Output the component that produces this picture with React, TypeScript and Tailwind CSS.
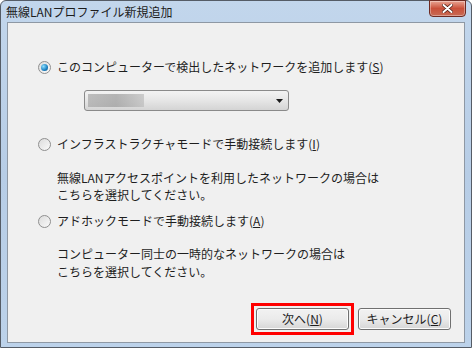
import React from 'react';

const font = { fontFamily: '"Noto Sans CJK JP", "Noto Sans", sans-serif' };

const Radio: React.FC<{ checked?: boolean }> = ({ checked }) => (
  <span className="relative flex items-center justify-center w-[13px] h-[13px] rounded-full border border-[#8f8f8f] bg-gradient-to-br from-[#dcdcdc] to-[#fafafa] shrink-0">
    {checked && (
      <span className="w-[7px] h-[7px] rounded-full bg-[radial-gradient(circle_at_35%_35%,#8fe0ff,#1a7fc0_60%,#0d4f80)]" />
    )}
  </span>
);

const Option: React.FC<{ label: string; keyChar: string; checked?: boolean }> = ({ label, keyChar, checked }) => (
  <div className="flex items-center gap-[6px] h-[16px]">
    <Radio checked={checked} />
    <span className="text-[12px] leading-[16px] text-[#1e1e1e]">
      {label}(<span className="underline">{keyChar}</span>)
    </span>
  </div>
);

const Button: React.FC<{ children: React.ReactNode }> = ({ children }) => (
  <div className="w-[93px] h-[22px] rounded-[3px] border border-[#707070] bg-gradient-to-b from-[#f2f2f2] via-[#ebebeb] to-[#d6d6d6] flex items-center justify-center text-[12px] text-[#1e1e1e] shadow-[inset_0_0_0_1px_#fcfcfc]">
    {children}
  </div>
);

export default function App() {
  return (
    <div style={font} className="w-[472px] h-[348px] bg-[#fff] overflow-hidden">
      <div className="w-[472px] h-[348px] rounded-t-[6px] border border-[#555c66] bg-gradient-to-b from-[#c2d6ec] via-[#b7cde6] to-[#bcd2ea] flex flex-col">
        {/* title bar */}
        <div className="h-[21px] flex items-start justify-between pl-[5px] pr-[5px]">
          <span className="text-[12px] leading-[20px] text-[#1c1c1c] mt-[1px]">無線LANプロファイル新規追加</span>
          <div className="w-[37px] h-[17px] -mt-[1px] rounded-b-[4px] border border-[#6e2a22] bg-gradient-to-b from-[#e8a493] via-[#c9503a] to-[#c86a55] flex items-center justify-center shadow-[inset_0_0_0_1px_rgba(255,255,255,0.35)]">
            <svg width="11" height="9" viewBox="0 0 11 9">
              <path d="M1.5 1 L9.5 8 M9.5 1 L1.5 8" stroke="#4a1810" strokeWidth="3.4" strokeLinecap="round" />
              <path d="M1.5 1 L9.5 8 M9.5 1 L1.5 8" stroke="#ffffff" strokeWidth="2" strokeLinecap="round" />
            </svg>
          </div>
        </div>
        {/* client area */}
        <div className="mx-[6px] mb-[4px] flex-1 border border-[#8e98a4] bg-[#f0f0f0] flex flex-col pl-[30px] text-[#1e1e1e]">
          <div className="mt-[36px]">
            <Option label="このコンピューターで検出したネットワークを追加します" keyChar="S" checked />
          </div>
          <div className="mt-[15px] ml-[46px] w-[205px] h-[21px] rounded-[3px] border border-[#8a8a8a] bg-gradient-to-b from-[#f3f3f3] via-[#e6e6e6] to-[#d4d4d4] flex items-center justify-between pl-[3px] pr-[5px]">
            <div className="w-[56px] h-[13px] bg-gradient-to-r from-[#a8a8a8] via-[#9a9a9a] to-[#bdbdbd] opacity-70" />
            <svg width="7" height="4" viewBox="0 0 7 4"><path d="M0 0 H7 L3.5 4 Z" fill="#1a1a1a" /></svg>
          </div>
          <div className="mt-[25px]">
            <Option label="インフラストラクチャモードで手動接続します" keyChar="I" />
          </div>
          <div className="mt-[17px] ml-[19px] text-[12px] leading-[17px]">
            <div>無線LANアクセスポイントを利用したネットワークの場合は</div>
            <div>こちらを選択してください。</div>
          </div>
          <div className="mt-[10px]">
            <Option label="アドホックモードで手動接続します" keyChar="A" />
          </div>
          <div className="mt-[16px] ml-[19px] text-[12px] leading-[18px]">
            <div>コンピューター同士の一時的なネットワークの場合は</div>
            <div>こちらを選択してください。</div>
          </div>
          <div className="mt-auto mb-[7px] flex justify-end items-center gap-[4px] pr-[13px]">
            <div className="border-[3px] border-[#ff0000] p-[2px]">
              <Button>
                次へ(<span className="underline">N</span>)
              </Button>
            </div>
            <Button>
              キャンセル(<span className="underline">C</span>)
            </Button>
          </div>
        </div>
      </div>
    </div>
  );
}
